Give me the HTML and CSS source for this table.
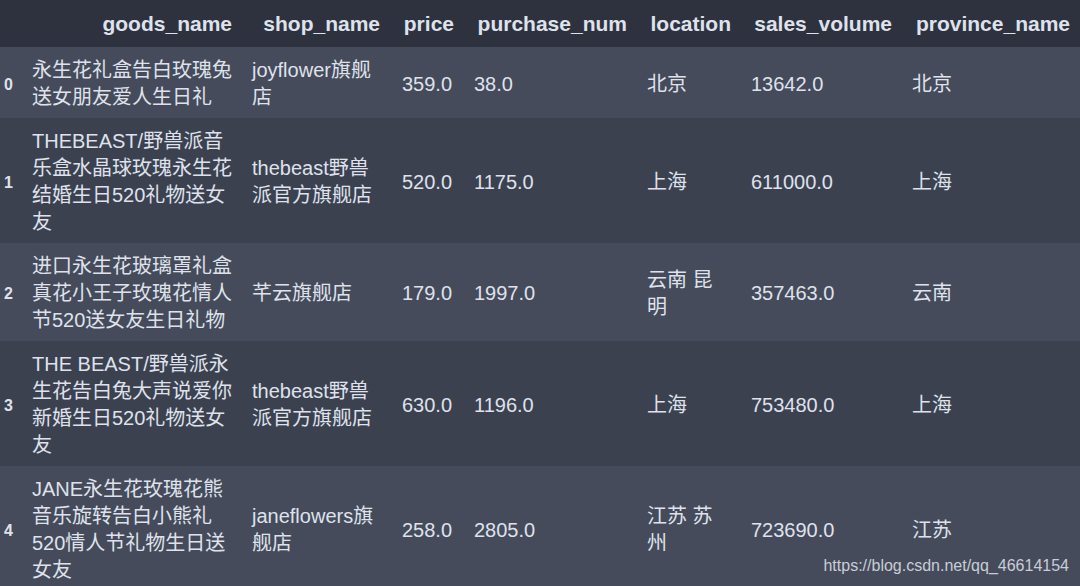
FILE: index.html
```html
<!DOCTYPE html>
<html lang="zh">
<head>
<meta charset="utf-8">
<title>DataFrame</title>
<link rel="stylesheet" href="styles.css">
</head>
<body>
<div class="frame">
  <div class="row hd">
    <div class="c c-idx"></div>
    <div class="c">goods_name</div>
    <div class="c c-shop">shop_name</div>
    <div class="c">price</div>
    <div class="c">purchase_num</div>
    <div class="c">location</div>
    <div class="c">sales_volume</div>
    <div class="c">province_name</div>
  </div>
  <div class="row light">
    <div class="c c-idx">0</div>
    <div class="c">永生花礼盒告白玫瑰兔送女朋友爱人生日礼</div>
    <div class="c c-shop">joyflower旗舰店</div>
    <div class="c">359.0</div>
    <div class="c">38.0</div>
    <div class="c">北京</div>
    <div class="c">13642.0</div>
    <div class="c">北京</div>
  </div>
  <div class="row dark">
    <div class="c c-idx">1</div>
    <div class="c">THEBEAST/野兽派音乐盒水晶球玫瑰永生花结婚生日520礼物送女友</div>
    <div class="c c-shop">thebeast野兽派官方旗舰店</div>
    <div class="c">520.0</div>
    <div class="c">1175.0</div>
    <div class="c">上海</div>
    <div class="c">611000.0</div>
    <div class="c">上海</div>
  </div>
  <div class="row light">
    <div class="c c-idx">2</div>
    <div class="c">进口永生花玻璃罩礼盒真花小王子玫瑰花情人节520送女友生日礼物</div>
    <div class="c c-shop">芊云旗舰店</div>
    <div class="c">179.0</div>
    <div class="c">1997.0</div>
    <div class="c">云南 昆明</div>
    <div class="c">357463.0</div>
    <div class="c">云南</div>
  </div>
  <div class="row dark">
    <div class="c c-idx">3</div>
    <div class="c">THE BEAST/野兽派永生花告白兔大声说爱你新婚生日520礼物送女友</div>
    <div class="c c-shop">thebeast野兽派官方旗舰店</div>
    <div class="c">630.0</div>
    <div class="c">1196.0</div>
    <div class="c">上海</div>
    <div class="c">753480.0</div>
    <div class="c">上海</div>
  </div>
  <div class="row light">
    <div class="c c-idx">4</div>
    <div class="c">JANE永生花玫瑰花熊音乐旋转告白小熊礼520情人节礼物生日送女友</div>
    <div class="c c-shop">janeflowers旗舰店</div>
    <div class="c">258.0</div>
    <div class="c">2805.0</div>
    <div class="c">江苏 苏州</div>
    <div class="c">723690.0</div>
    <div class="c">江苏</div>
  </div>
  <div class="watermark">https://blog.csdn.net/qq_46614154</div>
</div>
</body>
</html>
```

FILE: styles.css
```css
* { box-sizing: border-box; }
html, body {
  margin: 0;
  padding: 0;
  background: #454b5a;
}
body {
  width: 1080px;
  height: 586px;
  overflow: hidden;
  font-family: "Liberation Sans", "Noto Sans CJK SC", sans-serif;
  color: #dfe2ec;
}
.frame {
  position: relative;
  width: 1080px;
  height: 586px;
  overflow: hidden;
}
.row {
  display: grid;
  grid-template-columns: 22px 220px 150px 72px 173px 104px 161px 178px;
  align-items: center;
  font-size: 20px;
  line-height: 27px;
  padding: 10px 0 7px;
}
.light { background: #454b5a; }
.dark { background: #3c4150; }
.c {
  padding: 0 10px;
  text-align: left;
}
.c-shop { padding: 0 8px 0 10px; }
.c-idx {
  padding: 0 0 0 4px;
  font-size: 16px;
  font-weight: bold;
}
.hd {
  background: #2d323e;
  height: 47px;
  padding: 0;
  font-size: 21px;
  font-weight: bold;
}
.hd .c { text-align: right; }
.hd .c-shop { padding-right: 12px; }
.watermark {
  position: absolute;
  right: 11px;
  bottom: 11px;
  font-size: 16px;
  line-height: 18px;
  color: #c9cdd7;
  font-family: "Liberation Sans", sans-serif;
}
```
